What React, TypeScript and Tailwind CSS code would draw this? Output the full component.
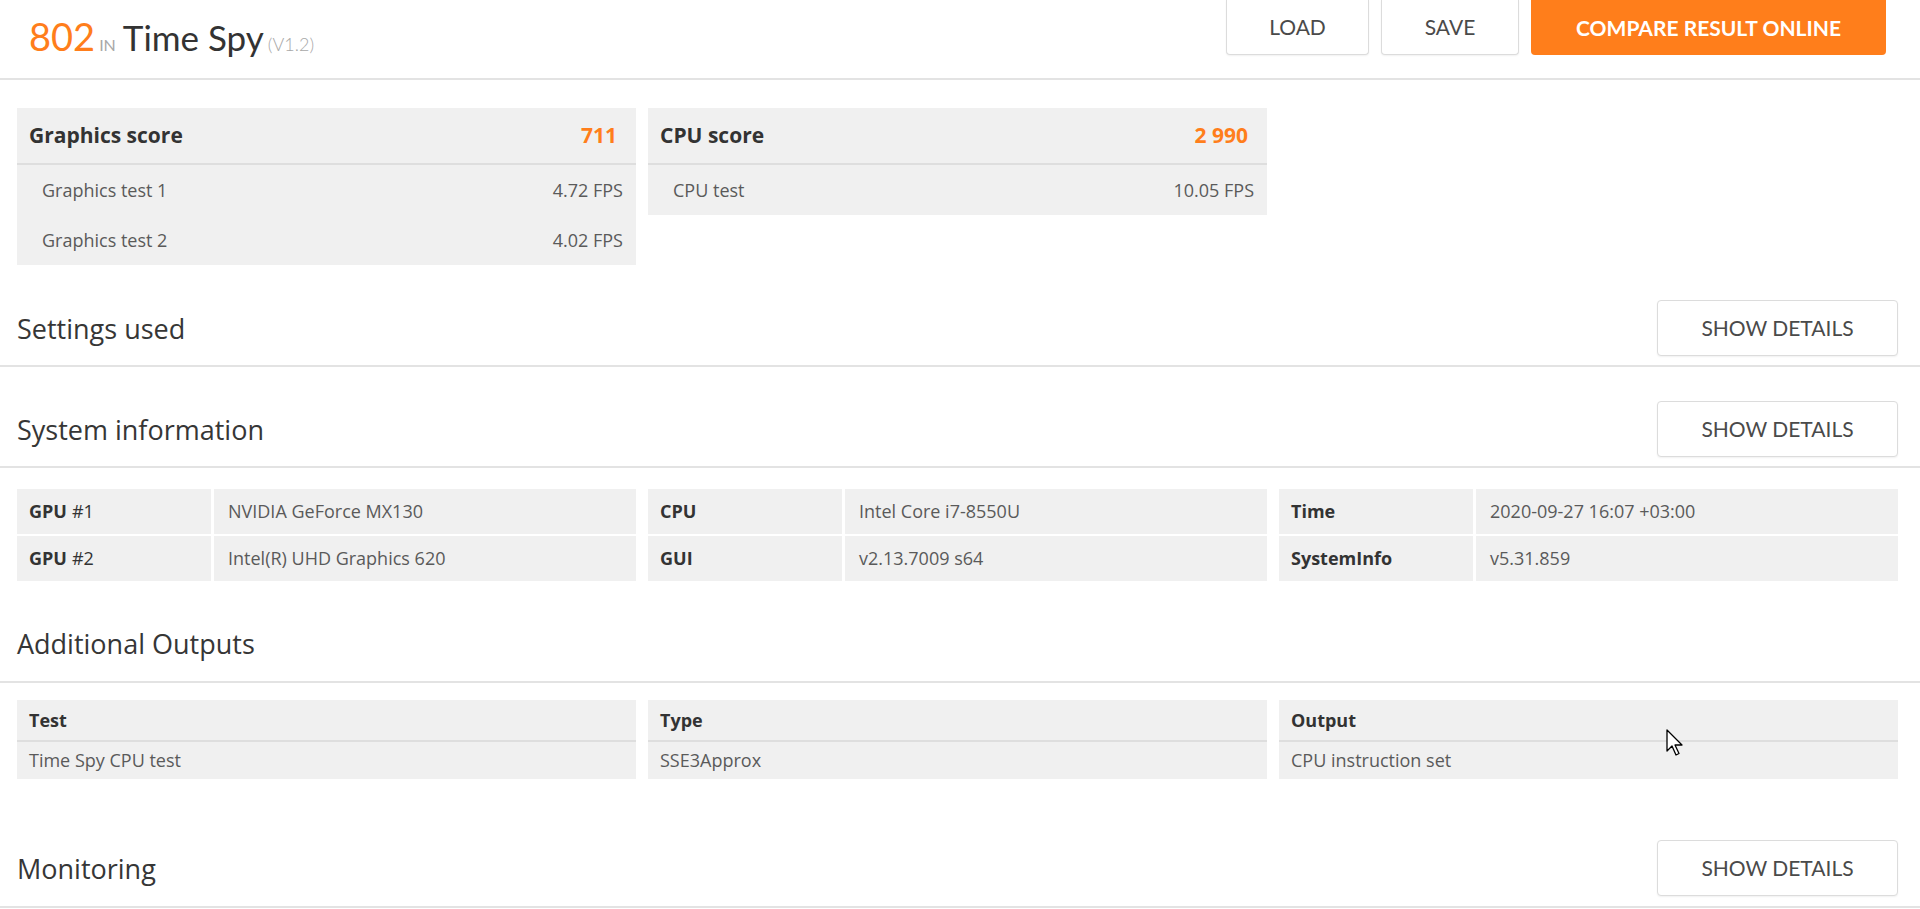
import React from "react";

const orange = "text-[#ff7e1b]";

function SectionHeader({
  title,
  button = true,
  top = "pt-[34px]",
  bottom = "pb-[9px]",
}: {
  title: string;
  button?: boolean;
  top?: string;
  bottom?: string;
}) {
  return (
    <div className={`${top} ${bottom} border-b-2 border-[#e3e3e3]`}>
      <div className="h-[56px] flex items-center justify-between pl-[17px] pr-[22px]">
        <h2 className="font-['Open_Sans',sans-serif] text-[27px] text-[#363636] leading-none">{title}</h2>
        {button && (
          <button className="w-[241px] h-[56px] border border-[#dcdcdc] rounded-[4px] bg-white font-['Lato',sans-serif] text-[21px] text-[#4a4a4a] shadow-[0_1px_2px_rgba(0,0,0,0.06)]">
            SHOW DETAILS
          </button>
        )}
      </div>
    </div>
  );
}

function ScorePanel({ name, score, rows }: { name: string; score: string; rows: [string, string][] }) {
  return (
    <div className="bg-[#f0f0f0]">
      <div className="h-[57px] flex items-center justify-between pl-[12px] pr-[19px] border-b-2 border-[#dedede]">
        <span className="font-bold text-[21px] text-[#333]">{name}</span>
        <span className={`font-bold text-[21px] ${orange}`}>{score}</span>
      </div>
      {rows.map(([label, value]) => (
        <div key={label} className="h-[50px] flex items-center justify-between pl-[25px] pr-[13px] text-[18px] text-[#5a5a5a]">
          <span>{label}</span>
          <span>{value}</span>
        </div>
      ))}
    </div>
  );
}

const sysInfo: [string, string, string][][] = [
  [
    ["GPU", "#1", "NVIDIA GeForce MX130"],
    ["GPU", "#2", "Intel(R) UHD Graphics 620"],
  ],
  [
    ["CPU", "", "Intel Core i7-8550U"],
    ["GUI", "", "v2.13.7009 s64"],
  ],
  [
    ["Time", "", "2020-09-27 16:07 +03:00"],
    ["SystemInfo", "", "v5.31.859"],
  ],
];

const outputs = [
  ["Test", "Time Spy CPU test"],
  ["Type", "SSE3Approx"],
  ["Output", "CPU instruction set"],
];

export default function App() {
  return (
    <div className="w-[1920px] h-[909px] overflow-hidden bg-white relative font-['Open_Sans',sans-serif]">
      {/* top bar */}
      <div className="h-[80px] border-b-2 border-[#e3e3e3] flex items-start justify-between pl-[29px] pr-[34px]">
        <div className="flex items-baseline pt-[17px] font-['Lato',sans-serif] leading-none">
          <span className={`text-[38px] ${orange}`}>802</span>
          <span className="text-[16px] text-[#a8a8a8] ml-[4px]">IN</span>
          <span className="text-[35px] text-[#333] ml-[7px]">Time Spy</span>
          <span className="text-[18px] text-[#a8a8a8] ml-[4px] font-light">(V1.2)</span>
        </div>
        <div className="flex gap-[12px] font-['Lato',sans-serif] text-[21px]">
          <button className="w-[143px] h-[55px] bg-white border border-t-0 border-[#dcdcdc] rounded-b-[4px] text-[#4a4a4a] shadow-[0_1px_2px_rgba(0,0,0,0.06)]">
            LOAD
          </button>
          <button className="w-[138px] h-[55px] bg-white border border-t-0 border-[#dcdcdc] rounded-b-[4px] text-[#4a4a4a] shadow-[0_1px_2px_rgba(0,0,0,0.06)]">
            SAVE
          </button>
          <button className="w-[355px] h-[55px] bg-[#ff7e1b] rounded-b-[4px] text-white font-bold">
            COMPARE RESULT ONLINE
          </button>
        </div>
      </div>

      {/* scores */}
      <div className="pt-[28px] pl-[17px] pr-[22px] grid grid-cols-3 gap-[12px] items-start">
        <ScorePanel
          name="Graphics score"
          score="711"
          rows={[
            ["Graphics test 1", "4.72 FPS"],
            ["Graphics test 2", "4.02 FPS"],
          ]}
        />
        <ScorePanel name="CPU score" score="2 990" rows={[["CPU test", "10.05 FPS"]]} />
      </div>

      <SectionHeader title="Settings used" top="pt-[35px]" />
      <SectionHeader title="System information" />

      <div className="mt-[21px] pl-[17px] pr-[22px] grid grid-cols-3 gap-[12px]">
        {sysInfo.map((group, gi) => (
          <div key={gi} className="flex flex-col gap-[2px]">
            {group.map(([bold, rest, value]) => (
              <div key={bold + rest} className="grid grid-cols-[194px_1fr] gap-[3px] h-[45px] text-[18px]">
                <div className="bg-[#f0f0f0] flex items-center gap-[5px] pl-[12px] text-[#333]">
                  <span className="font-bold">{bold}</span>
                  {rest && <span>{rest}</span>}
                </div>
                <div className="bg-[#f0f0f0] flex items-center pl-[14px] text-[#5a5a5a]">{value}</div>
              </div>
            ))}
          </div>
        ))}
      </div>

      <SectionHeader title="Additional Outputs" button={false} top="pt-[34px]" bottom="pb-[10px]" />

      <div className="mt-[17px] pl-[17px] pr-[22px] grid grid-cols-3 gap-[12px]">
        {outputs.map(([head, value]) => (
          <div key={head} className="bg-[#f0f0f0] text-[18px]">
            <div className="h-[42px] flex items-center pl-[12px] font-bold text-[#333] border-b-2 border-[#dedede]">{head}</div>
            <div className="h-[37px] flex items-center pl-[12px] text-[#5a5a5a]">{value}</div>
          </div>
        ))}
      </div>

      <SectionHeader title="Monitoring" top="pt-[61px]" bottom="pb-[10px]" />

      {/* mouse pointer */}
      <svg className="absolute left-[1666px] top-[729px]" width="20" height="30" viewBox="0 0 20 30">
        <path d="M1 1 L1 22 L6 17 L10 26 L13 24.5 L9 16 L16 16 Z" fill="#fff" stroke="#000" strokeWidth="1.3" strokeLinejoin="round" />
      </svg>
    </div>
  );
}
